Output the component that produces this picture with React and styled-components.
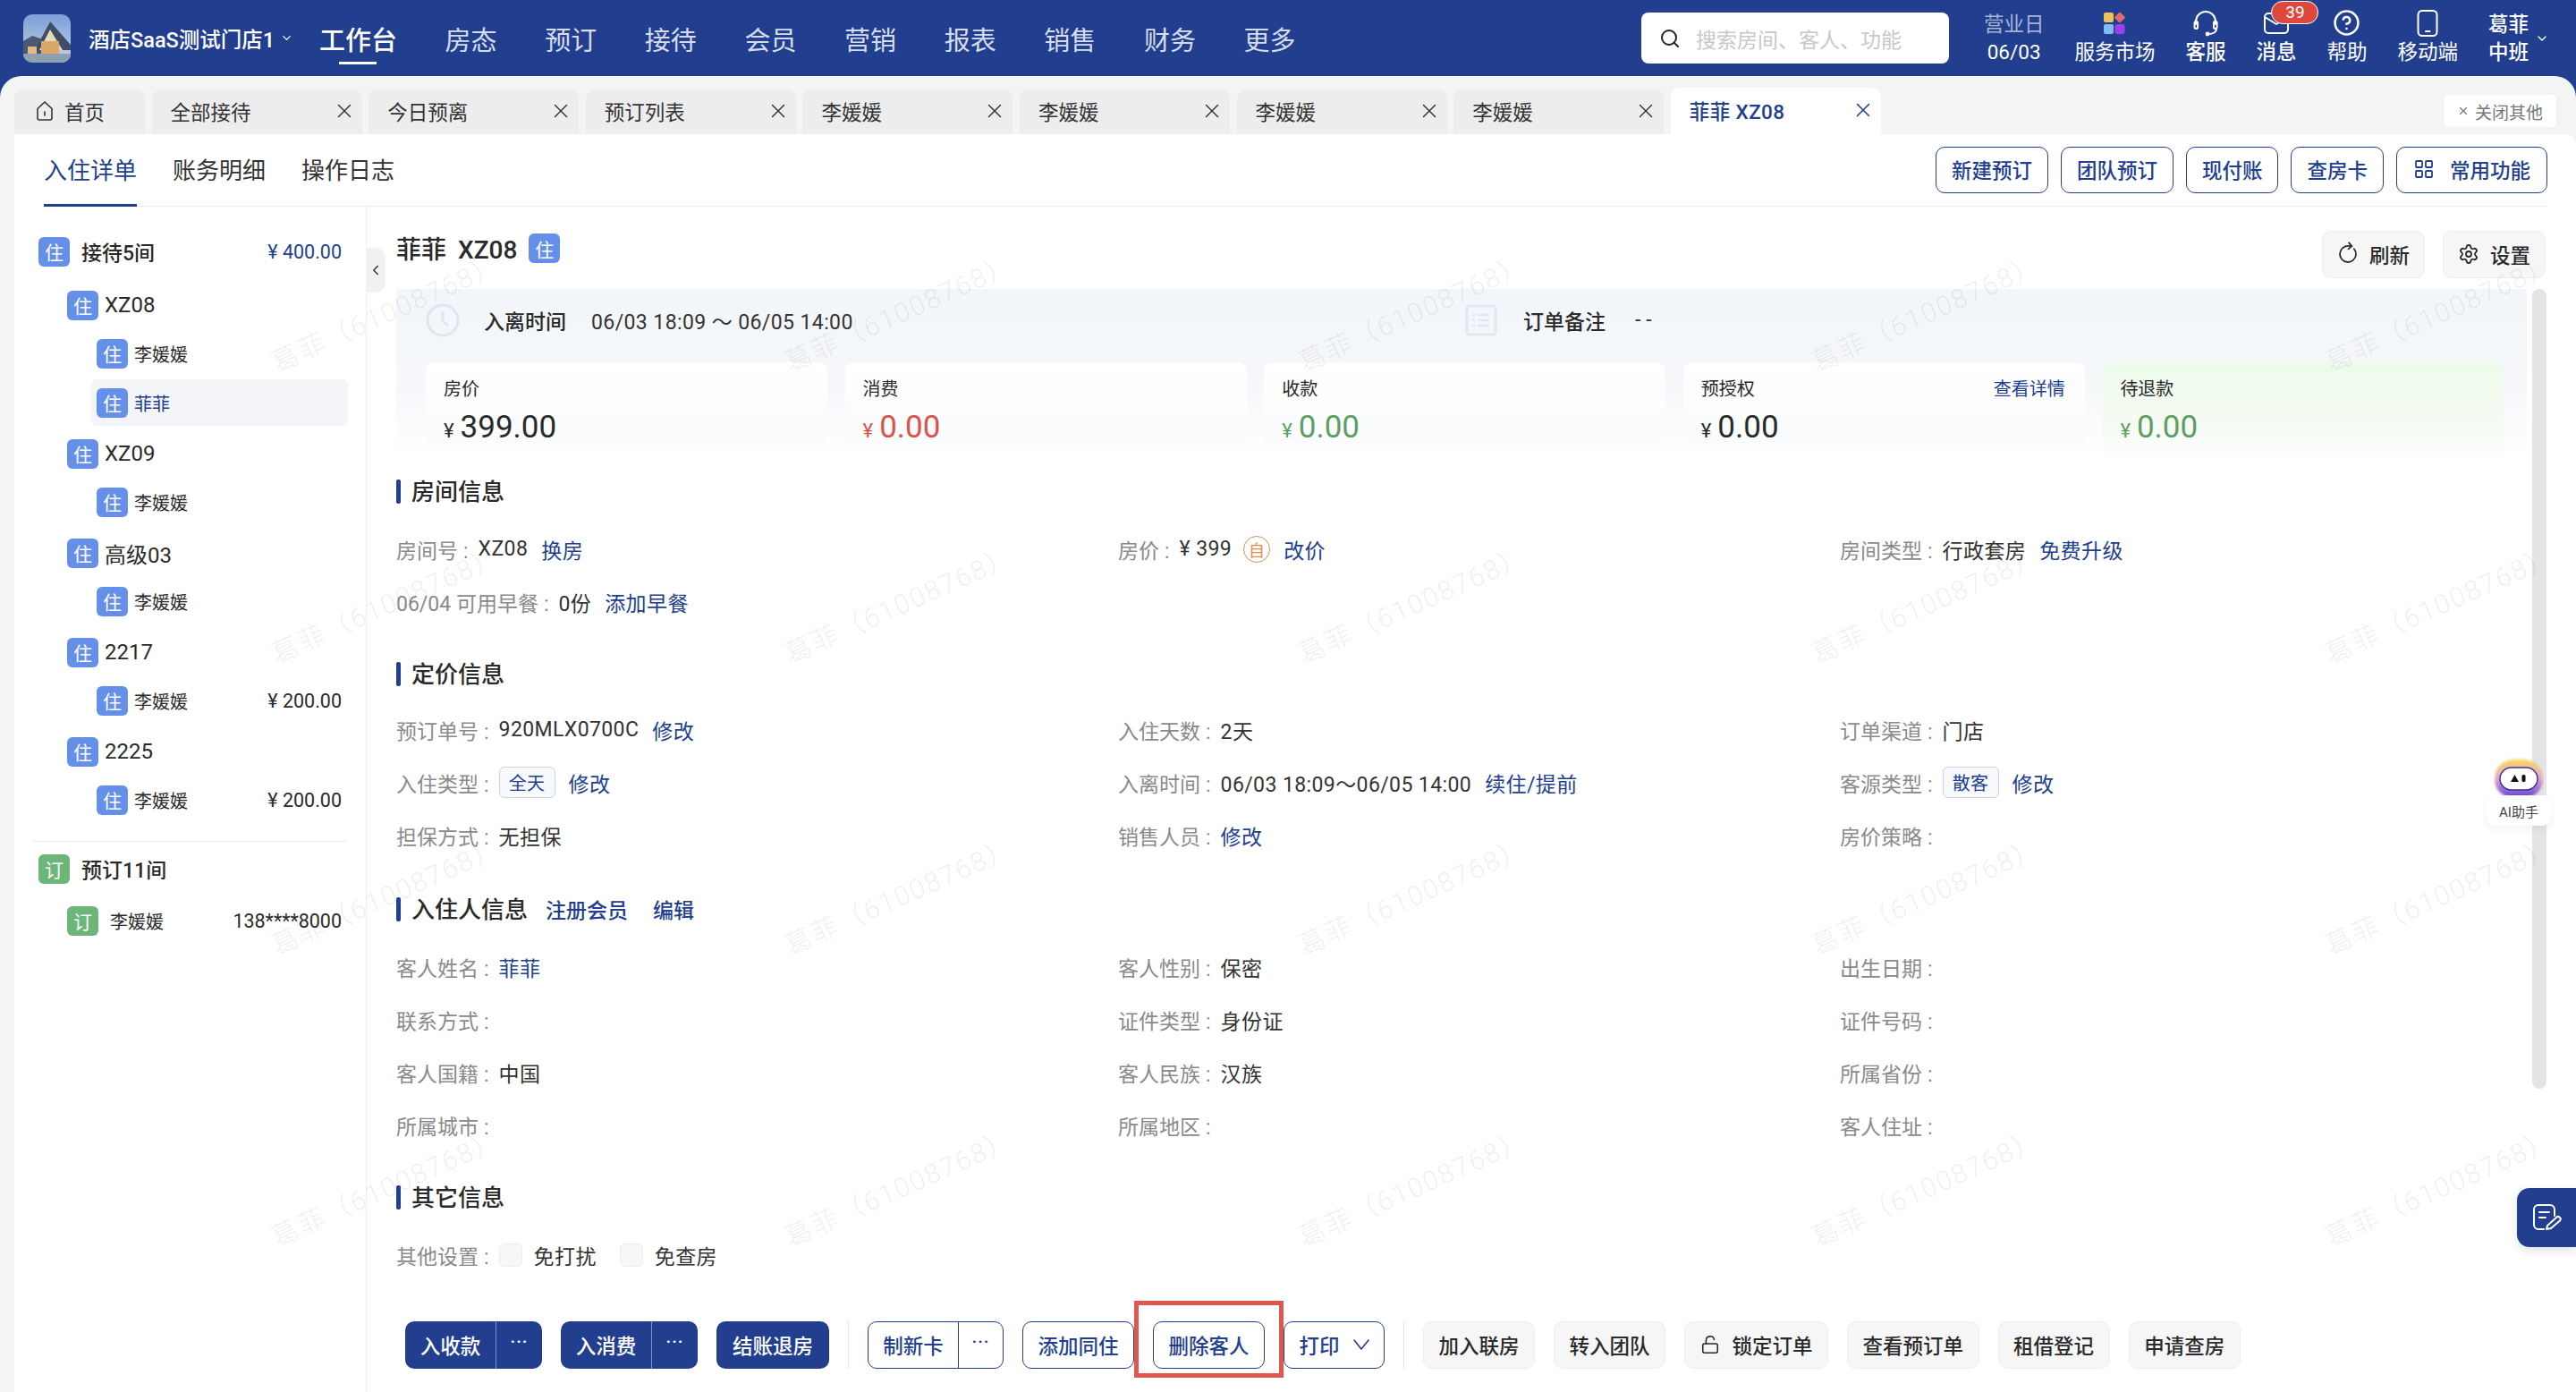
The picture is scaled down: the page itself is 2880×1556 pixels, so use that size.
import React from 'react';
import styled, { createGlobalStyle, css } from 'styled-components';
import { ChevronDown, ChevronLeft, Search, X, LayoutGrid, RotateCw, Settings, LockOpen, CircleHelp } from 'lucide-react';

const BLUE = '#223f8f';

const Global = createGlobalStyle`
  html, body { margin: 0; padding: 0; background: ${BLUE}; }
  body { font-family: Roboto, "Noto Sans CJK SC", sans-serif; color: #2a2a2a; }
  * { box-sizing: border-box; }
`;

const Page = styled.div`
  position: relative; width: 2880px; height: 1556px; overflow: hidden;
  display: flex; flex-direction: column; background: ${BLUE};
`;

/* ---------- header ---------- */
const Header = styled.header`
  flex: none; height: 85px; display: flex; align-items: center; padding: 0 30px 0 26px; color: #fff;
`;
const Logo = styled.svg`width: 53px; height: 54px; border-radius: 10px; flex: none;`;
const Store = styled.div`
  margin-left: 20px; font-size: 23.5px; font-weight: 500; display: flex; align-items: center; gap: 6px; width: 258px; white-space: nowrap;
`;
const Nav = styled.nav`display: flex; gap: 53.6px; height: 85px;`;
const NavItem = styled.a`
  position: relative; display: flex; align-items: center; font-size: 29px;
  color: ${p => (p.$active ? '#fff' : 'rgba(255,255,255,.84)')};
  font-weight: ${p => (p.$active ? 500 : 400)};
  ${p => p.$active && css`
    &::after { content: ''; position: absolute; top: 69px; left: 22px; width: 42px; height: 3px; background: #fff; }
  `}
`;
const HeaderRight = styled.div`margin-left: auto; display: flex; align-items: center; gap: 34px;`;
const SearchBox = styled.div`
  width: 344px; height: 57px; background: #fff; border-radius: 8px; display: flex; align-items: center;
  padding-left: 20px; gap: 17px; color: #c8c8c8; font-size: 23px; margin-right: 5px;
`;
const Business = styled.div`
  display: flex; flex-direction: column; align-items: center; height: 62px; font-size: 22.5px; line-height: 31px; color: #fff;
  span:first-child { color: rgba(255,255,255,.62); }
`;
const Tool = styled.div`
  position: relative; display: flex; flex-direction: column; align-items: center; height: 66px; font-size: 22.5px; color: #fff;
`;
const ToolIcon = styled.div`height: 32px; display: flex; align-items: center; justify-content: center;`;
const ToolLabel = styled.div`line-height: 32px; font-weight: ${p => p.$bold ? 500 : 400};`;
const Badge = styled.div`
  position: absolute; top: -9px; left: 17px; width: 53px; height: 26px; border-radius: 13px; background: #dd4a3c;
  border: 1.5px solid #fff; color: #fff; font-size: 19px; display: flex; align-items: center; justify-content: center; z-index: 2;
`;
const User = styled.div`
  display: flex; align-items: center; gap: 7px; font-size: 22.5px; line-height: 31px; font-weight: 500; margin-right: 0;
  div { display: flex; flex-direction: column; }
`;

/* ---------- main ---------- */
const Main = styled.main`
  flex: 1; min-height: 0; display: flex; flex-direction: column; background: #f4f4f5; border-radius: 24px 24px 0 0;
`;
const TabRow = styled.div`flex: none; height: 65px; display: flex; align-items: flex-end; padding-left: 16px; gap: 7.6px;`;
const Tab = styled.div`
  height: ${p => (p.$active ? 52 : 50)}px; width: ${p => (p.$home ? 146 : 235)}px; flex: none;
  display: flex; align-items: center; justify-content: ${p => (p.$home ? 'flex-start' : 'space-between')};
  padding: 0 ${p => (p.$home ? 12 : 7)}px 2px ${p => (p.$home ? 24 : 21)}px; gap: 12px;
  background: ${p => (p.$active ? '#fff' : '#ededee')}; border-radius: 10px 10px 0 0;
  font-size: 22.5px; white-space: nowrap; letter-spacing: ${p => (p.$active ? '.4px' : 0)};
  color: ${p => (p.$active ? BLUE : '#333')}; font-weight: ${p => (p.$active ? 500 : 400)};
`;
const CloseOther = styled.div`
  margin: 0 21px 7px auto; width: 128px; height: 38px; background: #fff; border-radius: 6px; border: 1px solid #efefef;
  font-size: 19px; color: #777; display: flex; align-items: center; justify-content: center; gap: 6px;
`;
const Panel = styled.div`flex: 1; min-height: 0; margin-left: 16px; background: #fff; display: flex; flex-direction: column; border-radius: 0 12px 0 0;`;
const PanelTop = styled.div`
  flex: none; height: 81px; margin: 0 32px 0 33px; display: flex; align-items: center; border-bottom: 1px solid #ececec;
`;
const SubTabs = styled.div`display: flex; gap: 40px; height: 81px;`;
const SubTab = styled.div`
  display: flex; align-items: center; font-size: 26px;
  color: ${p => (p.$active ? BLUE : '#333')};
  border-bottom: 3px solid ${p => (p.$active ? BLUE : 'transparent')};
`;
const TopActions = styled.div`margin-left: auto; display: flex; gap: 14px;`;
const Outline = styled.button`
  height: 52px; padding: 0 ${p => p.$pad || 17}px 2px; border: 1px solid ${BLUE}; border-radius: 10px; background: #fff; color: ${BLUE};
  font: 500 22.5px Roboto, "Noto Sans CJK SC", sans-serif; display: flex; align-items: center; gap: 17px; white-space: nowrap;
`;
const Body = styled.div`flex: 1; min-height: 0; display: flex;`;

/* ---------- side list ---------- */
const Side = styled.aside`
  position: relative; flex: none; width: 394px; border-right: 1px solid #eeeeee; padding: 24px 20px 0 21px;
`;
const Handle = styled.div`
  position: absolute; right: -22px; top: 46px; width: 22px; height: 50px; background: #f0f1f2; border-radius: 0 12px 12px 0;
  display: flex; align-items: center; justify-content: center; color: #333;
`;
const SideRow = styled.div`
  height: 52px; display: flex; align-items: center; padding: 0 7px 0 6px; border-radius: 6px;
  margin-left: ${p => p.$indent}px; margin-top: ${p => p.$mt}px;
  background: ${p => (p.$active ? '#f4f5f8' : 'transparent')};
`;
const StateBadge = styled.span`
  flex: none; width: 35px; height: 33px; border-radius: 6px; color: #fff; font-size: 21px; display: flex; align-items: center; justify-content: center;
  background: ${p => (p.$green ? '#6cb67a' : '#6490ea')};
`;
const SideName = styled.span`
  margin-left: ${p => p.$gap}px; font-size: ${p => p.$size}px; font-weight: ${p => p.$weight || 400}; color: ${p => p.$color || '#2a2a2a'}; white-space: nowrap;
`;
const SidePrice = styled.span`margin-left: auto; font-size: 21.5px; color: ${p => p.$color || '#2a2a2a'};`;
const SideLine = styled.div`height: 1px; background: #eeeeee; margin: 20px 1px 0 -1px;`;

/* ---------- content ---------- */
const Content = styled.section`flex: 1; min-width: 0; padding: 27px 34px 0 33px; display: flex; flex-direction: column;`;
const TitleRow = styled.div`display: flex; align-items: flex-start; height: 52px; margin-bottom: 13px;`;
const Title = styled.h1`margin: 1px 0 0; font-size: 28px; font-weight: 500; line-height: 42px; word-spacing: 6px; white-space: pre;`;
const TitleBadge = styled(StateBadge)`margin: 3px 0 0 13px;`;
const GrayBtn = styled.button`
  height: 53px; padding: 0 ${p => p.$pad || 16.5}px 2px; border: 1px solid #eeeeee; border-radius: 10px; background: #f6f6f6; color: #2a2a2a; white-space: nowrap;
  font: 500 22.5px Roboto, "Noto Sans CJK SC", sans-serif; display: flex; align-items: center; gap: ${p => p.$gap || 12}px;
`;
const TitleBtns = styled.div`margin-left: auto; display: flex; gap: 20px;`;

const Summary = styled.div`
  margin: 0 21px 24px 0; height: 187px; padding: 0 26px 0 33px; background: linear-gradient(180deg, #f2f5f9 0%, #f6f8fb 60%, #ffffff 100%);
`;
const SummaryHead = styled.div`height: 72px; margin-bottom: 10px; padding-bottom: 3px; display: flex; align-items: center; font-size: 23px;`;
const SummaryPart = styled.div`display: flex; align-items: center; width: ${p => p.$w || 'auto'};`;
const SummaryLabel = styled.span`font-weight: 500; margin-left: ${p => p.$ml}px; font-size: 23px;`;
const SummaryValue = styled.span`margin-left: ${p => p.$ml}px; color: #333; letter-spacing: ${p => p.$track || '.4px'};`;
const Cards = styled.div`display: grid; grid-template-columns: repeat(5, 449px); gap: 19.6px;`;
const Card = styled.div`
  height: 105px; padding: 15px 22px 0 20px; border-radius: 10px 10px 0 0;
  background: linear-gradient(180deg, ${p => (p.$tint ? '#edfbea' : '#ffffff')} 0%, ${p => (p.$tint ? '#f6fbf4' : '#fbfcfd')} 70%, rgba(255,255,255,0) 100%);
`;
const CardTop = styled.div`display: flex; justify-content: space-between; font-size: 20px; line-height: 30px;`;
const Money = styled.div`
  margin-top: 7px; display: flex; align-items: baseline; gap: 7px; color: ${p => p.$color || '#2a2a2a'}; font-size: 35px; line-height: 42px;
  small { font-size: 22px; }
`;
const LinkText = styled.a`
  color: ${BLUE}; font-size: ${p => p.$size || 23}px; margin-left: ${p => p.$ml ?? 15}px; white-space: nowrap;
`;

const Section = styled.div`
  margin-top: ${p => p.$mt ?? 47}px;
`;
const SecTitle = styled.div`
  height: 30px; display: flex; align-items: center; gap: 12px; font-size: 26px; font-weight: 500; margin-bottom: ${p => p.$mb || 34}px;
  &::before { content: ''; width: 5px; height: 27px; border-radius: 2px; background: ${BLUE}; }
`;
const SecText = styled.span`margin-top: -3px;`;
const Fields = styled.div`display: grid; grid-template-columns: repeat(3, 807px); row-gap: 25px;`;
const Field = styled.div`
  height: 34px; padding-bottom: 3px; display: flex; align-items: center; font-size: 23px; white-space: nowrap; color: #333; letter-spacing: .4px;
`;
const FieldLabel = styled.span`
  color: #8a8a8a; letter-spacing: 0;
  &::after { content: ':'; margin: 0 11px 0 6px; }
`;
const Tag = styled.span`
  width: 63px; height: 35px; border: 1px solid #c9d3e8; border-radius: 6px; background: #f7f9fc; color: ${BLUE}; font-size: 20px;
  display: flex; align-items: center; justify-content: center;
`;
const SelfMark = styled.span`
  width: 30px; height: 30px; margin-left: 13px; border: 1.5px solid #e08a55; border-radius: 50%; color: #e08a55; font-size: 18px;
  display: flex; align-items: center; justify-content: center;
`;
const Check = styled.span`
  width: 26px; height: 26px; border: 1px solid #ececec; border-radius: 6px; background: #f7f7f7; margin-right: 13px;
  margin-left: ${p => p.$ml || 0}px;
`;

/* ---------- footer ---------- */
const Footer = styled.footer`margin-top: auto; padding: 0 0 26px 10px; display: flex; gap: 21px; align-items: center;`;
const Split = styled.div`
  height: 53px; display: flex; border-radius: 10px; overflow: hidden; font-size: 22.5px; font-weight: 500;
  ${p => p.$solid
    ? css`background: ${BLUE}; color: #fff;`
    : css`background: #fff; color: ${BLUE}; border: 1px solid ${BLUE};`}
  span { display: flex; align-items: center; justify-content: center; padding-bottom: 2px; }
  span:first-child { width: ${p => (p.$solid ? 101 : 100)}px; }
  span:last-child { width: ${p => (p.$solid ? 52 : 50)}px; font-size: 20px; letter-spacing: 1px; border-left: 1px solid ${p => (p.$solid ? '#7f93c5' : BLUE)}; padding-bottom: 8px; }
`;
const Solid = styled.button`
  height: 53px; width: 126px; padding: 0 0 2px; border: none; border-radius: 10px; background: ${BLUE}; color: #fff;
  font: 500 22.5px Roboto, "Noto Sans CJK SC", sans-serif;
`;
const FootOutline = styled(Outline)`
  position: relative; height: 53px; padding: 0 16.5px 2px; gap: 15px;
  ${p => p.$marked && css`
    &::after { content: ''; position: absolute; top: -24px; bottom: -11px; left: -22px; right: -22px; border: 5px solid #e0574e; }
  `}
`;
const FootDivider = styled.div`width: 1px; height: 53px; background: #e6e6e6;`;

/* ---------- overlays ---------- */
const Watermarks = styled.div`
  position: absolute; left: 144px; top: 185px; display: grid; grid-template-columns: repeat(5, 574px); grid-auto-rows: 326px;
  place-items: center; pointer-events: none; z-index: 5;
`;
const Mark = styled.span`
  transform: rotate(-24deg); font-size: 30px; font-weight: 300; letter-spacing: 2px; white-space: nowrap; color: rgba(0,0,0,.08);
`;
const ScrollThumb = styled.div`
  position: absolute; left: 2831px; top: 323px; width: 16px; height: 894px; background: #e4e4e4; border-radius: 8px;
`;
const Assistant = styled.div`
  position: absolute; left: 2779px; top: 847px; width: 74px; display: flex; flex-direction: column; align-items: center; z-index: 6;
`;
const AssistantCard = styled.div`
  margin-top: -6px; width: 74px; height: 34px; background: #fff; border-radius: 0 0 12px 12px; box-shadow: 0 4px 8px rgba(0,0,0,.05);
  font-size: 15px; color: #444; display: flex; align-items: center; justify-content: center;
`;
const FloatBtn = styled.div`
  position: absolute; left: 2814px; top: 1328px; width: 66px; height: 66px; background: ${BLUE}; border-radius: 14px 0 0 14px; z-index: 6;
  display: flex; align-items: center; justify-content: center; box-shadow: 0 4px 12px rgba(0,0,0,.12);
`;

/* ---------- drawings ---------- */
const LogoArt = () => (
  <Logo viewBox="0 0 53 54">
    <defs><linearGradient id="sky" x1="0" y1="0" x2="0" y2="1"><stop offset="0" stopColor="#7da0d8" /><stop offset="1" stopColor="#c4d3e8" /></linearGradient></defs>
    <rect width="53" height="54" fill="url(#sky)" />
    <path d="M0 30L10 24L28 30V54H0Z" fill="#4a5a75" />
    <path d="M30 8L14 40H46Z" fill="#e9d9b8" />
    <path d="M30 8L12 42L17 42L30 17L44 40H53L53 34Z" fill="#3f4d66" />
    <rect x="20" y="30" width="20" height="14" fill="#d9a76a" />
    <path d="M0 44H53V54H0Z" fill="#8fa0b0" />
    <rect x="5" y="36" width="10" height="8" fill="#e0b988" />
  </Logo>
);
const HomeIcon = () => (
  <svg width="20" height="24" viewBox="0 0 20 24" fill="none" stroke="#333" strokeWidth="1.6">
    <path d="M2 9.5L10 2L18 9.5V20a2 2 0 0 1-2 2H4a2 2 0 0 1-2-2Z" strokeLinejoin="round" />
    <path d="M10 13V17" strokeLinecap="round" />
  </svg>
);
const MarketIcon = () => (
  <svg width="24" height="26" viewBox="0 0 24 26">
    <rect x="0" y="1" width="11" height="11" rx="2" fill="#eec15a" />
    <rect x="13.5" y="2" width="9" height="9" rx="1.5" fill="#e06a6a" transform="rotate(45 18 6.5)" />
    <rect x="0" y="14" width="11" height="11" rx="2" fill="#7fbcf5" />
    <rect x="12.5" y="14" width="11" height="11" rx="2" fill="#9b3fe8" />
  </svg>
);
const HeadsetIcon = () => (
  <svg width="28" height="30" viewBox="0 0 28 30" fill="none" stroke="#fff" strokeWidth="2" strokeLinecap="round">
    <path d="M3 16V13a11 11 0 0 1 22 0v3" />
    <rect x="1.5" y="13" width="3.6" height="8" rx="1.8" />
    <rect x="23" y="13" width="3.6" height="8" rx="1.8" />
    <path d="M26 21c0 4-4 6-9 6" />
    <circle cx="16" cy="27" r="1.4" fill="#fff" />
  </svg>
);
const MailIcon = () => (
  <svg width="28" height="24" viewBox="0 0 28 24" fill="none" stroke="#fff" strokeWidth="2" strokeLinejoin="round">
    <rect x="1" y="1" width="26" height="22" rx="4" />
    <path d="M1 5L14 13L27 5" />
  </svg>
);
const PhoneIcon = () => (
  <svg width="24" height="30" viewBox="0 0 24 30" fill="none" stroke="#fff" strokeWidth="2" strokeLinecap="round">
    <rect x="1.5" y="1" width="21" height="28" rx="4.5" />
    <path d="M10 24H14.5" />
  </svg>
);
const ClockIcon = () => (
  <svg width="38" height="38" viewBox="0 0 38 38" fill="none" stroke="#dfe5f1" strokeWidth="3" strokeLinecap="round">
    <circle cx="19" cy="19" r="17" />
    <path d="M19 10V20L24 24" />
  </svg>
);
const NoteIcon = () => (
  <svg width="36" height="36" viewBox="0 0 36 36" fill="none" stroke="#e2e7f1" strokeWidth="3" strokeLinecap="round">
    <rect x="2" y="2" width="32" height="32" rx="3" />
    <path d="M15 12H26M15 18H26M15 24H26M9 12H10M9 18H10M9 24H10" strokeWidth="2.4" />
  </svg>
);
const WideChevron = () => (
  <svg width="18" height="12" viewBox="0 0 18 12" fill="none" stroke={BLUE} strokeWidth="1.6" strokeLinecap="round" strokeLinejoin="round">
    <path d="M1 1L9 11L17 1" />
  </svg>
);
const AiFace = () => (
  <svg width="56" height="48" viewBox="0 0 56 48" style={{ display: 'block' }}>
    <defs>
      <linearGradient id="ring" x1="0" y1="0" x2="0" y2="1">
        <stop offset="0" stopColor="#f8d95c" /><stop offset=".5" stopColor="#e2a6c8" /><stop offset="1" stopColor="#5b3fd8" />
      </linearGradient>
      <filter id="soft"><feGaussianBlur stdDeviation="1.6" /></filter>
    </defs>
    <rect x="1" y="2" width="54" height="43" rx="21" fill="url(#ring)" filter="url(#soft)" />
    <rect x="7" y="11" width="42" height="25" rx="12.5" fill="#fff" stroke="#3b2f9e" strokeWidth="1.5" />
    <path d="M19 27L23.5 19L28 27Z" fill="#111" />
    <rect x="31.5" y="19" width="4" height="8" rx="1.5" fill="#111" />
  </svg>
);
const NotePen = () => (
  <svg width="34" height="34" viewBox="0 0 34 34" fill="none" stroke="#fff" strokeWidth="2" strokeLinecap="round" strokeLinejoin="round">
    <path d="M14 30H8a5 5 0 0 1-5-5V8a5 5 0 0 1 5-5h13a5 5 0 0 1 5 5v7" />
    <path d="M9 11H20M9 17H16" />
    <path d="M17 30l1-4 10-9a2.6 2.6 0 0 1 4 3.4L22 29Z" />
  </svg>
);

/* ---------- data ---------- */
const navs = ['工作台', '房态', '预订', '接待', '会员', '营销', '报表', '销售', '财务', '更多'];
const tabs = ['全部接待', '今日预离', '预订列表', '李媛媛', '李媛媛', '李媛媛', '李媛媛'];
const sideRows = [
  { kind: 'top', name: '接待5间', price: '¥ 400.00', priceColor: BLUE, mt: 0 },
  { kind: 'room', name: 'XZ08', mt: 8 },
  { kind: 'guest', name: '李媛媛', mt: 2 },
  { kind: 'guest', name: '菲菲', active: true, mt: 3 },
  { kind: 'room', name: 'XZ09', mt: 5 },
  { kind: 'guest', name: '李媛媛', mt: 2 },
  { kind: 'room', name: '高级03', mt: 5 },
  { kind: 'guest', name: '李媛媛', mt: 2 },
  { kind: 'room', name: '2217', mt: 5 },
  { kind: 'guest', name: '李媛媛', price: '¥ 200.00', mt: 2 },
  { kind: 'room', name: '2225', mt: 5 },
  { kind: 'guest', name: '李媛媛', price: '¥ 200.00', mt: 2 },
];
const KIND = {
  top: { indent: 0, gap: 13, size: 23, weight: 500 },
  room: { indent: 32, gap: 7, size: 24, weight: 400 },
  guest: { indent: 65, gap: 7, size: 20, weight: 400 },
  book: { indent: 32, gap: 13, size: 20, weight: 400 },
};
const cards = [
  { label: '房价', value: '399.00' },
  { label: '消费', value: '0.00', color: '#d9534a' },
  { label: '收款', value: '0.00', color: '#5d9e63' },
  { label: '预授权', value: '0.00', detail: true },
  { label: '待退款', value: '0.00', color: '#5d9e63', tint: true },
];

const SideItem = ({ r, green }) => {
  const k = KIND[r.kind];
  return (
    <SideRow $indent={k.indent} $mt={r.mt} $active={r.active}>
      <StateBadge $green={green}>{green ? '订' : '住'}</StateBadge>
      <SideName $gap={k.gap} $size={k.size} $weight={k.weight} $color={r.active ? BLUE : undefined}>{r.name}</SideName>
      {r.price && <SidePrice $color={r.priceColor}>{r.price}</SidePrice>}
    </SideRow>
  );
};
const F = ({ label, children }) => (
  <Field><FieldLabel>{label}</FieldLabel>{children}</Field>
);

export default function App() {
  return (
    <Page>
      <Global />
      <Header>
        <LogoArt />
        <Store>酒店SaaS测试门店1<ChevronDown size={15} strokeWidth={2} /></Store>
        <Nav>{navs.map((n, i) => <NavItem key={n} $active={i === 0}>{n}</NavItem>)}</Nav>
        <HeaderRight>
          <SearchBox><Search size={24} color="#222" strokeWidth={2} />搜索房间、客人、功能</SearchBox>
          <Business><span>营业日</span><span>06/03</span></Business>
          <Tool><ToolIcon><MarketIcon /></ToolIcon><ToolLabel>服务市场</ToolLabel></Tool>
          <Tool><ToolIcon><HeadsetIcon /></ToolIcon><ToolLabel $bold>客服</ToolLabel></Tool>
          <Tool><ToolIcon><MailIcon /></ToolIcon><ToolLabel $bold>消息</ToolLabel><Badge>39</Badge></Tool>
          <Tool><ToolIcon><CircleHelp size={31} strokeWidth={2} /></ToolIcon><ToolLabel>帮助</ToolLabel></Tool>
          <Tool><ToolIcon><PhoneIcon /></ToolIcon><ToolLabel>移动端</ToolLabel></Tool>
          <User><div><span>葛菲</span><span>中班</span></div><ChevronDown size={16} strokeWidth={2} /></User>
        </HeaderRight>
      </Header>

      <Main>
        <TabRow>
          <Tab $home><HomeIcon />首页</Tab>
          {tabs.map((t, i) => <Tab key={i}>{t}<X size={26} strokeWidth={1.3} /></Tab>)}
          <Tab $active>菲菲 XZ08<X size={26} strokeWidth={1.4} /></Tab>
          <CloseOther><X size={14} />关闭其他</CloseOther>
        </TabRow>

        <Panel>
          <PanelTop>
            <SubTabs>
              <SubTab $active>入住详单</SubTab>
              <SubTab>账务明细</SubTab>
              <SubTab>操作日志</SubTab>
            </SubTabs>
            <TopActions>
              <Outline>新建预订</Outline>
              <Outline>团队预订</Outline>
              <Outline>现付账</Outline>
              <Outline>查房卡</Outline>
              <Outline $pad={18}><LayoutGrid size={24} strokeWidth={1.8} />常用功能</Outline>
            </TopActions>
          </PanelTop>

          <Body>
            <Side>
              <Handle><ChevronLeft size={18} /></Handle>
              {sideRows.map((r, i) => <SideItem key={i} r={r} />)}
              <SideLine />
              <SideItem green r={{ kind: 'top', name: '预订11间', mt: 4 }} />
              <SideItem green r={{ kind: 'book', name: '李媛媛', price: '138****8000', mt: 6 }} />
            </Side>

            <Content>
              <TitleRow>
                <Title>菲菲 XZ08</Title>
                <TitleBadge>住</TitleBadge>
                <TitleBtns>
                  <GrayBtn $pad={16}><RotateCw size={24} strokeWidth={1.8} style={{ transform: 'rotate(-40deg)' }} />刷新</GrayBtn>
                  <GrayBtn $pad={16}><Settings size={24} strokeWidth={1.8} />设置</GrayBtn>
                </TitleBtns>
              </TitleRow>

              <Summary>
                <SummaryHead>
                  <SummaryPart $w="1162px">
                    <ClockIcon />
                    <SummaryLabel $ml={27}>入离时间</SummaryLabel>
                    <SummaryValue $ml={28}>06/03 18:09 ～ 06/05 14:00</SummaryValue>
                  </SummaryPart>
                  <SummaryPart>
                    <NoteIcon />
                    <SummaryLabel $ml={29}>订单备注</SummaryLabel>
                    <SummaryValue $ml={33} $track="6px">--</SummaryValue>
                  </SummaryPart>
                </SummaryHead>
                <Cards>
                  {cards.map(c => (
                    <Card key={c.label} $tint={c.tint}>
                      <CardTop><span>{c.label}</span>{c.detail && <LinkText $size={20} $ml={0}>查看详情</LinkText>}</CardTop>
                      <Money $color={c.color}><small>¥</small>{c.value}</Money>
                    </Card>
                  ))}
                </Cards>
              </Summary>

              <Section $mt={0}>
                <SecTitle><SecText>房间信息</SecText></SecTitle>
                <Fields>
                  <F label="房间号">XZ08<LinkText>换房</LinkText></F>
                  <F label="房价">¥ 399<SelfMark>自</SelfMark><LinkText>改价</LinkText></F>
                  <F label="房间类型">行政套房<LinkText>免费升级</LinkText></F>
                  <F label="06/04 可用早餐">0份<LinkText>添加早餐</LinkText></F>
                </Fields>
              </Section>

              <Section>
                <SecTitle $mb={32}><SecText>定价信息</SecText></SecTitle>
                <Fields>
                  <F label="预订单号">920MLX0700C<LinkText>修改</LinkText></F>
                  <F label="入住天数">2天</F>
                  <F label="订单渠道">门店</F>
                  <F label="入住类型"><Tag>全天</Tag><LinkText>修改</LinkText></F>
                  <F label="入离时间">06/03 18:09～06/05 14:00<LinkText>续住/提前</LinkText></F>
                  <F label="客源类型"><Tag>散客</Tag><LinkText>修改</LinkText></F>
                  <F label="担保方式">无担保</F>
                  <F label="销售人员"><LinkText $ml={0}>修改</LinkText></F>
                  <F label="房价策略" />
                </Fields>
              </Section>

              <Section $mt={49}>
                <SecTitle>
                  <SecText>入住人信息</SecText>
                  <LinkText $ml={8}>注册会员</LinkText>
                  <LinkText $ml={16}>编辑</LinkText>
                </SecTitle>
                <Fields>
                  <F label="客人姓名"><LinkText $ml={0}>菲菲</LinkText></F>
                  <F label="客人性别">保密</F>
                  <F label="出生日期" />
                  <F label="联系方式" />
                  <F label="证件类型">身份证</F>
                  <F label="证件号码" />
                  <F label="客人国籍">中国</F>
                  <F label="客人民族">汉族</F>
                  <F label="所属省份" />
                  <F label="所属城市" />
                  <F label="所属地区" />
                  <F label="客人住址" />
                </Fields>
              </Section>

              <Section>
                <SecTitle><SecText>其它信息</SecText></SecTitle>
                <Fields>
                  <F label="其他设置"><Check />免打扰<Check $ml={26} />免查房</F>
                </Fields>
              </Section>

              <Footer>
                <Split $solid><span>入收款</span><span>···</span></Split>
                <Split $solid><span>入消费</span><span>···</span></Split>
                <Solid>结账退房</Solid>
                <FootDivider />
                <Split><span>制新卡</span><span>···</span></Split>
                <FootOutline>添加同住</FootOutline>
                <FootOutline $marked>删除客人</FootOutline>
                <FootOutline>打印<WideChevron /></FootOutline>
                <FootDivider />
                <GrayBtn>加入联房</GrayBtn>
                <GrayBtn>转入团队</GrayBtn>
                <GrayBtn $gap={14}><LockOpen size={22} strokeWidth={1.7} />锁定订单</GrayBtn>
                <GrayBtn>查看预订单</GrayBtn>
                <GrayBtn>租借登记</GrayBtn>
                <GrayBtn>申请查房</GrayBtn>
              </Footer>
            </Content>
          </Body>
        </Panel>
      </Main>

      <ScrollThumb />
      <Watermarks>
        {Array.from({ length: 20 }, (_, i) => <Mark key={i}>葛菲（61008768）</Mark>)}
      </Watermarks>
      <Assistant><AiFace /><AssistantCard>AI助手</AssistantCard></Assistant>
      <FloatBtn><NotePen /></FloatBtn>
    </Page>
  );
}
